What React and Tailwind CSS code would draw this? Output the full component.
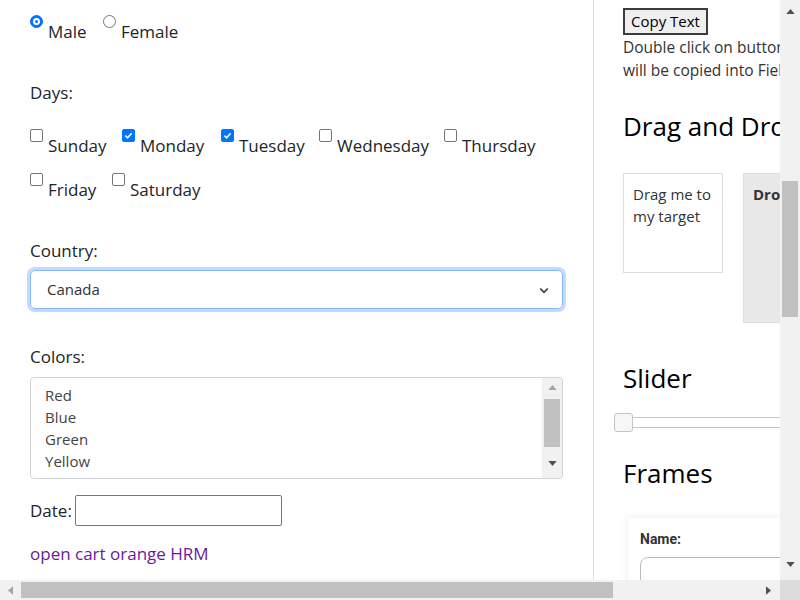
import { useState } from "react";

const font = { fontFamily: '"Open Sans", "Noto Sans", Arial, sans-serif' };

const Check = ({ checked, round }) => (
  <span
    className={`mt-0 flex h-[13px] w-[13px] shrink-0 items-center justify-center border ${
      round ? "rounded-full" : "rounded-[2px]"
    } ${checked ? "border-[#0075ff] bg-[#0075ff]" : "border-[#767676] bg-white"}`}
  >
    {checked && !round && (
      <svg viewBox="0 0 10 10" className="h-[9px] w-[9px]">
        <path d="M1.5 5.2 L4 7.5 L8.5 2.5" fill="none" stroke="white" strokeWidth="1.8" />
      </svg>
    )}
    {checked && round && <span className="h-[7px] w-[7px] rounded-full border-2 border-white bg-[#0075ff]" />}
  </span>
);

const Option = ({ label, checked, round, width }) => (
  <label className={`flex items-start gap-[5px] ${width}`}>
    <Check checked={checked} round={round} />
    <span className="mt-[5px] whitespace-nowrap text-[17px] leading-[24px] text-[#212529]">{label}</span>
  </label>
);

const App = () => {
  const [country] = useState("Canada");

  return (
    <div className="flex h-[600px] w-[800px] flex-col overflow-hidden bg-white" style={font}>
      <div className="flex h-[580px] w-[800px]">
        <div className="flex h-[580px] w-[780px] overflow-hidden">
          {/* left column */}
          <div className="w-[594px] shrink-0 border-r border-[#dedede] pl-[30px] text-[#212529]">
            <div className="flex pt-[15px]">
              <Option label="Male" round checked width="w-[73px]" />
              <Option label="Female" round width="w-[100px]" />
            </div>

            <div className="mt-[37px] text-[17px] leading-[24px]">Days:</div>

            <div className="mt-[24px] flex">
              <Option label="Sunday" width="w-[92px]" />
              <Option label="Monday" checked width="w-[99px]" />
              <Option label="Tuesday" checked width="w-[98px]" />
              <Option label="Wednesday" width="w-[125px]" />
              <Option label="Thursday" width="w-[100px]" />
            </div>
            <div className="mt-[15px] flex">
              <Option label="Friday" width="w-[82px]" />
              <Option label="Saturday" width="w-[100px]" />
            </div>

            <div className="mt-[37px] text-[17px] leading-[24px]">Country:</div>
            <div className="mt-[7px] flex h-[39px] w-[533px] items-center justify-between rounded-[5px] border border-[#86b7fe] pl-[16px] pr-[12px] shadow-[0_0_0_3px_rgba(13,110,253,0.25)]">
              <span className="text-[15px] text-[#333]">{country}</span>
              <svg viewBox="0 0 16 16" className="h-[12px] w-[12px]">
                <path d="M3 6 L8 11 L13 6" fill="none" stroke="#343a40" strokeWidth="2.2" />
              </svg>
            </div>

            <div className="mt-[36px] text-[17px] leading-[24px]">Colors:</div>
            <div className="mt-[8px] flex h-[102px] w-[533px] overflow-hidden rounded-[4px] border border-[#ced4da]">
              <div className="flex-1 pl-[14px] pt-[6px] text-[15px] leading-[22px] text-[#444]">
                <div>Red</div>
                <div>Blue</div>
                <div>Green</div>
                <div>Yellow</div>
                <div>White</div>
              </div>
              <div className="flex w-[20px] flex-col items-center bg-[#f1f1f1]">
                <svg viewBox="0 0 10 6" className="mt-[7px] h-[5px] w-[9px]">
                  <path d="M0 6 L5 0 L10 6 Z" fill="#a3a3a3" />
                </svg>
                <div className="mt-[9px] h-[48px] w-[16px] bg-[#c1c1c1]" />
                <svg viewBox="0 0 10 6" className="mt-[14px] h-[5px] w-[9px]">
                  <path d="M0 0 L5 6 L10 0 Z" fill="#505050" />
                </svg>
              </div>
            </div>

            <div className="mt-[16px] flex items-center gap-[3px]">
              <span className="text-[17px]">Date:</span>
              <div className="h-[31px] w-[207px] rounded-[2px] border border-[#767676]" />
            </div>

            <a className="mt-[16px] block text-[17px] leading-[24px] text-[#6a1b9a]">open cart orange HRM</a>
          </div>

          {/* right column */}
          <div className="min-w-0 flex-1 overflow-hidden pl-[29px] text-[#212529]">
            <button className="mt-[8px] flex h-[27px] w-[85px] items-center justify-center border-2 border-[#3c3c3c] bg-[#efefef] text-[15px] text-black">
              Copy Text
            </button>
            <div className="mt-[1px] whitespace-nowrap text-[15.5px] leading-[23px] text-[#333]">
              <div>Double click on button, the text</div>
              <div>will be copied into Field2.</div>
            </div>

            <h2 className="mt-[30px] whitespace-nowrap text-[26px] leading-[29px] text-black">Drag and Drop</h2>

            <div className="mt-[32px] flex items-start gap-[20px]">
              <div className="h-[100px] w-[100px] shrink-0 border border-[#dedede] pl-[9px] pt-[9px] text-[15px] leading-[22px] text-[#333]">
                Drag me to my target
              </div>
              <div className="h-[150px] w-[150px] shrink-0 border border-[#dedede] bg-[#e8e8e8] pl-[9px] pt-[9px] text-[15px] font-bold leading-[22px] text-[#333]">
                Drop here
              </div>
            </div>

            <h2 className="mt-[41px] text-[26px] leading-[29px] text-black">Slider</h2>

            <div className="relative -ml-[9px] mt-[20px] h-[19px] w-[300px]">
              <div className="absolute left-[10px] right-0 top-[4px] h-[11px] border border-[#c5c5c5] bg-white" />
              <div className="absolute left-0 top-0 h-[19px] w-[19px] rounded-[3px] border border-[#c5c5c5] bg-[#f6f6f6]" />
            </div>

            <h2 className="mt-[27px] text-[26px] leading-[29px] text-black">Frames</h2>

            <div className="ml-[5px] mt-[30px] h-[80px] w-[400px] bg-white pl-[12px] pt-[11px] shadow-[0_0_8px_rgba(0,0,0,0.08)]">
              <div className="text-[14px] font-bold text-[#333]" style={{ fontFamily: "Roboto, Arial, sans-serif" }}>
                Name:
              </div>
              <div className="mt-[7px] h-[40px] w-[300px] rounded-[8px] border border-[#bbb]" />
            </div>
          </div>
        </div>

        {/* vertical scrollbar */}
        <div className="flex h-[580px] w-[20px] flex-col items-center bg-[#f1f1f1]">
          <svg viewBox="0 0 10 6" className="mt-[9px] h-[5px] w-[9px]">
            <path d="M0 6 L5 0 L10 6 Z" fill="#505050" />
          </svg>
          <div className="mt-[167px] h-[136px] w-[16px] bg-[#c1c1c1]" />
          <svg viewBox="0 0 10 6" className="mt-[245px] h-[5px] w-[9px]">
            <path d="M0 0 L5 6 L10 0 Z" fill="#505050" />
          </svg>
        </div>
      </div>

      {/* horizontal scrollbar */}
      <div className="flex h-[20px] w-[800px]">
        <div className="flex h-[20px] w-[780px] items-center bg-[#f1f1f1]">
          <svg viewBox="0 0 6 10" className="ml-[8px] h-[9px] w-[5px]">
            <path d="M6 0 L0 5 L6 10 Z" fill="#a3a3a3" />
          </svg>
          <div className="ml-[8px] h-[16px] w-[592px] bg-[#c1c1c1]" />
          <svg viewBox="0 0 6 10" className="ml-[153px] h-[9px] w-[5px]">
            <path d="M0 0 L6 5 L0 10 Z" fill="#505050" />
          </svg>
        </div>
        <div className="h-[20px] w-[20px] bg-[#dcdcdc]" />
      </div>
    </div>
  );
};

export default App;
